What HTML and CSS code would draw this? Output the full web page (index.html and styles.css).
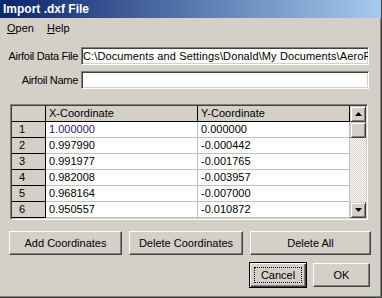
FILE: index.html
```html
<!DOCTYPE html>
<html lang="en">
<head>
    <meta charset="UTF-8">
    <title>Import .dxf File</title>
    <link rel="stylesheet" href="styles.css">
</head>
<body>
    <div class="window">
        <div class="titlebar">Import .dxf File</div>

        <div class="menubar">
            <span class="menu-item"><u>O</u>pen</span>
            <span class="menu-item"><u>H</u>elp</span>
        </div>

        <!-- file fields -->
        <div class="fields">
            <div class="field-row">
                <label for="dataFile">Airfoil Data File</label>
                <input type="text" id="dataFile" value="C:\Documents and Settings\Donald\My Documents\AeroFoil\NACA 2412.dxf">
            </div>
            <div class="field-row">
                <label for="airfoilName">Airfoil Name</label>
                <input type="text" id="airfoilName">
            </div>
        </div>

        <!-- coordinates grid -->
        <div class="grid">
            <div class="cells">
                <div class="cell fixed"></div>
                <div class="cell fixed head">X-Coordinate</div>
                <div class="cell fixed head last">Y-Coordinate</div>

                <div class="cell fixed num">1</div>
                <div class="cell data first">1.000000</div>
                <div class="cell data last">0.000000</div>

                <div class="cell fixed num">2</div>
                <div class="cell data">0.997990</div>
                <div class="cell data last">-0.000442</div>

                <div class="cell fixed num">3</div>
                <div class="cell data">0.991977</div>
                <div class="cell data last">-0.001765</div>

                <div class="cell fixed num">4</div>
                <div class="cell data">0.982008</div>
                <div class="cell data last">-0.003957</div>

                <div class="cell fixed num">5</div>
                <div class="cell data">0.968164</div>
                <div class="cell data last">-0.007000</div>

                <div class="cell fixed num">6</div>
                <div class="cell data">0.950557</div>
                <div class="cell data last">-0.010872</div>
            </div>
            <div class="scrollbar">
                <div class="sb-btn">
                    <svg width="7" height="4" viewBox="0 0 7 4"><path d="M3.5 0 L7 4 L0 4 Z" fill="#000"/></svg>
                </div>
                <div class="sb-thumb"></div>
                <div class="sb-track"></div>
                <div class="sb-btn">
                    <svg width="7" height="4" viewBox="0 0 7 4"><path d="M0 0 L7 0 L3.5 4 Z" fill="#000"/></svg>
                </div>
            </div>
        </div>

        <div class="actions">
            <button class="btn btn-add">Add Coordinates</button>
            <button class="btn btn-del">Delete Coordinates</button>
            <button class="btn btn-all">Delete All</button>
        </div>

        <div class="dialog-buttons">
            <button class="btn btn-default"><span class="focus">Cancel</span></button>
            <button class="btn btn-ok">OK</button>
        </div>
    </div>
</body>
</html>
```

FILE: styles.css
```css
body {
    margin: 0;
    padding: 0;
    background-color: #d4d0c8;
    font-family: "Liberation Sans", Arial, sans-serif;
    font-size: 11px;
    color: #000;
}

.window {
    width: 382px;
    height: 298px;
    box-sizing: border-box;
    border-right: 1px solid #404040;
    border-bottom: 1px solid #404040;
    box-shadow: inset -1px -1px 0 #808080;
    overflow: hidden;
}

.titlebar {
    height: 18px;
    line-height: 18px;
    padding-left: 3px;
    background: linear-gradient(to right, #0a246a, #a6caf0);
    color: white;
    font-weight: bold;
    font-size: 12px;
}

.menubar {
    height: 20px;
    padding: 4px 0 0 2px;
    box-sizing: border-box;
    line-height: 13px;
}

.menu-item {
    padding: 0 5px;
}

.menu-item u {
    text-decoration-thickness: 1px;
    text-underline-offset: 1px;
}

.fields {
    display: flex;
    flex-direction: column;
    gap: 6px;
    margin-top: 9px;
}

.field-row {
    display: flex;
    align-items: center;
    gap: 3px;
}

.field-row label {
    width: 78px;
    text-align: right;
    letter-spacing: -0.3px;
}

.field-row input {
    width: 288px;
    height: 18px;
    box-sizing: border-box;
    margin: 0;
    padding: 0 0 0 1px;
    border: 1px solid;
    border-color: #808080 #fff #fff #808080;
    box-shadow: inset 1px 1px 0 #404040, inset -1px -1px 0 #d4d0c8;
    background: white;
    font-family: "Liberation Sans", Arial, sans-serif;
    font-size: 11px;
    letter-spacing: 0.12px;
    color: #000;
    outline: none;
}

/* grid */

.grid {
    display: flex;
    width: 358px;
    height: 116px;
    box-sizing: border-box;
    margin: 15px 0 0 10px;
    border: 1px solid;
    border-color: #808080 #fff #fff #808080;
    box-shadow: inset 1px 1px 0 #404040, inset -1px -1px 0 #d4d0c8;
    padding: 1px;
    background: #d4d0c8;
    overflow: hidden;
}

.cells {
    display: grid;
    grid-template-columns: 34px 152px 152px;
    grid-auto-rows: 16px;
    width: 338px;
    background: white;
    overflow: hidden;
}

.cell {
    box-sizing: border-box;
    border-right: 1px solid #c0c0c0;
    border-bottom: 1px solid #c0c0c0;
    padding-left: 3px;
    line-height: 15px;
    white-space: nowrap;
    overflow: hidden;
}

.cell.fixed {
    background: #d4d0c8;
    border-color: #000;
}

.cell.num {
    padding-left: 7px;
}

.cell.first {
    color: #3a1470;
}

.scrollbar {
    display: flex;
    flex-direction: column;
    width: 16px;
}

.sb-btn,
.sb-thumb {
    height: 16px;
    box-sizing: border-box;
    border: 1px solid;
    border-color: #d4d0c8 #404040 #404040 #d4d0c8;
    box-shadow: inset 1px 1px 0 #fff, inset -1px -1px 0 #808080;
    background: #d4d0c8;
}

.sb-btn {
    display: flex;
    align-items: center;
    justify-content: center;
}

.sb-track {
    flex: 1;
    background: repeating-conic-gradient(#fff 0 25%, #d4d0c8 0 50%) 0 0 / 2px 2px;
}

/* buttons */

.btn {
    box-sizing: border-box;
    height: 24px;
    margin: 0;
    padding: 0;
    border: 1px solid;
    border-color: #fff #404040 #404040 #fff;
    box-shadow: inset -1px -1px 0 #808080;
    background: #d4d0c8;
    font-family: "Liberation Sans", Arial, sans-serif;
    font-size: 11px;
    color: #000;
}

.actions {
    display: flex;
    gap: 7px;
    margin: 11px 0 0 9px;
}

.btn-add {
    width: 113px;
}

.btn-del {
    width: 114px;
}

.btn-all {
    width: 121px;
}

.dialog-buttons {
    display: flex;
    align-items: center;
    justify-content: flex-end;
    gap: 6px;
    margin: 7px 11px 0 0;
}

.btn-default {
    width: 58px;
    height: 26px;
    border: 1px solid #000;
    box-shadow: inset 1px 1px 0 #fff, inset -1px -1px 0 #404040, inset -2px -2px 0 #808080;
    padding: 4px;
}

.btn-default .focus {
    display: block;
    height: 16px;
    line-height: 14px;
    box-sizing: border-box;
    border: 1px dotted #000;
}

.btn-ok {
    width: 57px;
}
```
